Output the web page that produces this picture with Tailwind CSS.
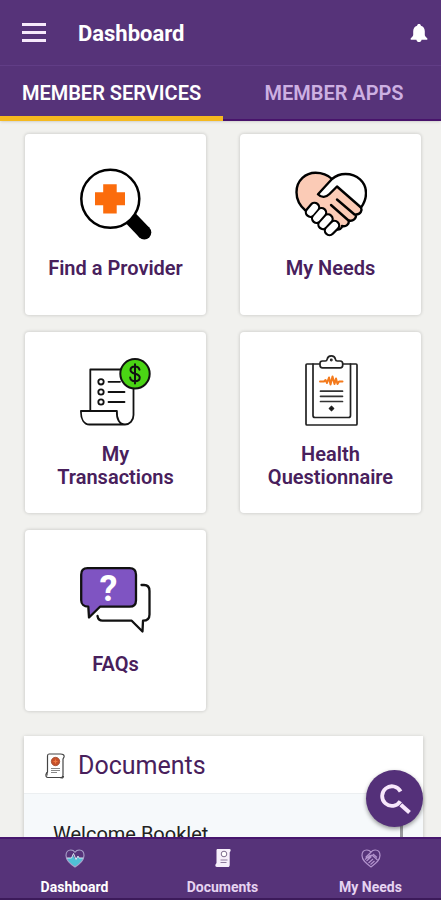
<!DOCTYPE html>
<html lang="en">
<head>
<meta charset="utf-8">
<meta name="viewport" content="width=device-width, initial-scale=1">
<title>Dashboard</title>
<script src="https://cdn.jsdelivr.net/npm/@tailwindcss/browser@4"></script>
</head>
<body class="flex h-screen flex-col overflow-hidden bg-[#f1f1ee] font-['Roboto',sans-serif]">

<header class="z-10 shrink-0 bg-[#563379] text-white shadow-sm">
  <div class="flex h-[66px] items-center border-b border-[#613d86] pr-3 pl-[22px]">
    <button type="button" aria-label="Open menu" class="flex w-6 flex-col gap-[5px]">
      <span class="h-[3px] w-full bg-[#f6e9fb]"></span>
      <span class="h-[3px] w-full bg-[#f6e9fb]"></span>
      <span class="h-[3px] w-full bg-[#f6e9fb]"></span>
    </button>
    <h1 class="ml-8 flex-1 pt-px text-[22px] font-bold">Dashboard</h1>
    <button type="button" aria-label="Notifications">
      <svg class="h-5 w-5" viewBox="0 0 20 20" fill="#fff"><path d="M10 1c1.200 0 1.800.700 1.900 1.700C14.500 3.600 15.800 5.600 15.800 8.200v3.500c0 1 .600 1.800 2.500 3.600v1.400H12.600c-.300 1.600-1.300 2.300-2.600 2.300s-2.300-.700-2.600-2.300H1.700v-1.400c1.900-1.800 2.500-2.600 2.500-3.600V8.200c0-2.600 1.300-4.600 3.900-5.500C8.200 1.700 8.800 1 10 1z"/></svg>
    </button>
  </div>
  <nav aria-label="Sections" class="grid h-[55px] grid-cols-[223fr_218fr] text-center text-[20px] font-semibold">
    <a href="#services" aria-current="page" class="flex items-center justify-center border-b-[5px] border-[#f5b91f] pt-1">MEMBER SERVICES</a>
    <a href="#apps" class="flex items-center justify-center border-b-2 border-[#48136b] pt-px pl-1 text-[#cdb0e2]">MEMBER APPS</a>
  </nav>
</header>

<main class="relative min-h-0 flex-1 overflow-hidden pt-[13px] pr-5 pl-[25px]">
  <div class="grid grid-cols-2 gap-x-[34px] gap-y-[17px] text-center text-[20px] leading-[23px] font-semibold text-[#48205c]">
    <a href="#provider" class="flex aspect-square flex-col items-center justify-center gap-4 rounded-[4px] bg-white pb-px shadow-[0_0_3px_1px_rgba(0,0,0,0.12)]">
      <svg class="h-[72px] w-[72px] overflow-visible" viewBox="0 0 72 72" aria-hidden="true">
        <path d="M50 48.500 64.300 63.500" stroke="#000" stroke-width="14"/>
        <circle cx="64.300" cy="63.500" r="7" fill="#000"/>
        <circle cx="30.300" cy="29.800" r="29" fill="#fff" stroke="#000" stroke-width="2.500"/>
        <path d="M23.200 15.200h13.500v8H45v13h-8.300v8.300H23.200v-8.300H15v-13h8.200z" fill="#fb6c0c"/>
      </svg>
      <span>Find a Provider</span>
    </a>
    <a href="#needs" class="flex aspect-square flex-col items-center justify-center gap-4 rounded-[4px] bg-white pb-px shadow-[0_0_3px_1px_rgba(0,0,0,0.12)]">
      <svg class="h-[72px] w-[72px]" viewBox="0 0 72 72" aria-hidden="true" fill="none" stroke="#000" stroke-width="2.400" stroke-linecap="round" stroke-linejoin="round">
        <path fill="#fbcbb6" d="M10.500 41.500C4 36 1.500 30 1.500 23.200 1.500 11 11 3.700 20.500 3.700c6.500 0 12 2 16.500 6.300L50 10 66 38.500c1.500 3-.500 7-5 7 .500 4-3 7-7 6 0 4-3 6.500-7 5.500 0 3-3 4-5.500 3.500L24 50z"/>
        <path fill="#fff" d="M37 10C41 6.500 46 5 50.500 5 62 5 71 13 71 24c0 5.500-2 10.500-5 14.500L42 17.500 34.500 25c-3.500 3.500-8 4-11.500.200z"/>
        <path d="M42 30.500 59.500 45.500M36 36 53.500 51.500"/>
        <g stroke-width="11.500"><path d="M15.500 43.200 19.500 38.500M21.700 49.300 26.500 43.700M28 55.500 33 50M34.500 61.500 39.500 56.500"/></g>
        <g stroke="#fff" stroke-width="7"><path d="M15.500 43.200 19.500 38.500M21.700 49.300 26.500 43.700M28 55.500 33 50M34.500 61.500 39.500 56.500"/></g>
      </svg>
      <span>My Needs</span>
    </a>
    <a href="#transactions" class="flex aspect-square flex-col items-center justify-center gap-4 rounded-[4px] bg-white pb-px shadow-[0_0_3px_1px_rgba(0,0,0,0.12)]">
      <svg class="h-[72px] w-[72px]" viewBox="0 0 72 72" aria-hidden="true" fill="none" stroke="#111" stroke-width="1.800" stroke-linecap="round" stroke-linejoin="round">
        <path d="M10.300 56V14.500H42M53.500 33v27c0 5.500-4 9.500-8.500 9.500H9.500C4 69.500.900 64 .900 56h36c-.500 8 2.500 13.500 8.200 13.500"/>
        <circle cx="21" cy="26.800" r="2.700"/><circle cx="21" cy="37" r="2.700"/><circle cx="21" cy="47" r="2.700"/>
        <path d="M28.500 26.800H40M28.500 37H44.500M28.500 47H44.500"/>
        <circle cx="55" cy="18.800" r="14.700" fill="#4ad414" stroke-width="2"/>
        <path d="M59.500 14.700c-.500-2.200-2.200-3.200-4.500-3.200-2.600 0-4.500 1.300-4.500 3.500 0 5 9.200 2.600 9.200 7.500 0 2.300-2 3.700-4.700 3.700-2.600 0-4.500-1.300-4.800-3.600M55 9.200v19.200" stroke-width="2"/>
      </svg>
      <span>My<br>Transactions</span>
    </a>
    <a href="#questionnaire" class="flex aspect-square flex-col items-center justify-center gap-4 rounded-[4px] bg-white pb-px shadow-[0_0_3px_1px_rgba(0,0,0,0.12)]">
      <svg class="h-[72px] w-[72px]" viewBox="0 0 72 72" aria-hidden="true" fill="none" stroke="#222" stroke-width="1.700" stroke-linecap="round" stroke-linejoin="round">
        <rect x="11" y="9" width="51" height="61" rx="1"/>
        <path d="M18 9v51.500c0 1.300.700 2 2 2h33.500c1.300 0 2-.700 2-2V9"/>
        <path fill="#fff" d="M25 8.700c0-1.900.800-2.700 2.500-2.700h2.800c1.300 0 1.700-.700 1.900-1.900C32.600 2 34 .900 36.300.900s3.700 1.100 4.100 3.200c.200 1.200.600 1.900 1.900 1.900h2.900c1.700 0 2.500.800 2.500 2.700v1.600c0 1.700-.800 2.500-2.500 2.500H27.500c-1.700 0-2.500-.800-2.500-2.500z"/>
        <circle cx="36.300" cy="5" r=".6"/>
        <path stroke="#f47a1c" stroke-width="2" d="M25 26.500h4l1.500-1.500 1.500 3 2-5.500 1.500 7 2-8 2 7.500 1.500-5.500 1.500 5.500 1.500-2.500H47.500"/>
        <path d="M25.500 36.200H47.500M25.500 41.300H47.500M25.500 46.500H47.500" stroke="#333"/>
        <path d="M36.500 51.500 38.500 53.500 36.500 55.500 34.500 53.500z" fill="#111"/>
      </svg>
      <span>Health<br>Questionnaire</span>
    </a>
    <a href="#faqs" class="flex aspect-square flex-col items-center justify-center gap-4 rounded-[4px] bg-white pb-px shadow-[0_0_3px_1px_rgba(0,0,0,0.12)]">
      <svg class="h-[72px] w-[72px]" viewBox="0 0 72 72" aria-hidden="true" fill="none" stroke="#111" stroke-width="2.300" stroke-linecap="round" stroke-linejoin="round">
        <path fill="#7f54c2" d="M7.500 3.200H49.500C53.500 3.200 56 5.700 56 9.700V35.200C56 39.200 53.500 41.700 49.500 41.700H20L9 52.500 8.300 41.700C4 41.700 1.200 39.200 1.200 35.200V9.700C1.200 5.700 3.500 3.200 7.500 3.200z"/>
        <path d="M61.500 20H64c4 0 5.500 2 5.500 6v23.500c0 4-2 6.200-6.500 6.200L62.500 66.500 51.700 55.700H22.500c-3 0-4.500-1.500-5-4.700"/>
        <text x="28.500" y="35.500" text-anchor="middle" font-size="36" font-weight="700" fill="#fff" stroke="none">?</text>
      </svg>
      <span>FAQs</span>
    </a>
  </div>

  <section class="mt-[25px] -mr-[2px] -ml-[1px] bg-white shadow-[0_1px_4px_rgba(0,0,0,0.22)]">
    <div class="flex h-[58px] items-center gap-3 border-b border-[#eceff1] px-[21px] pt-[3px]">
      <svg class="h-7 w-[21px]" viewBox="0 0 21 28" aria-hidden="true" fill="none" stroke="#444" stroke-width="1.200" stroke-linejoin="round">
        <path fill="#fff" d="M4 2h11.500c2.500 0 4 1 3.500 3l-1 2v16c0 2-1.500 3-3 2.500H3C1 25.500.800 24 1 22l1.500-2V4C2.500 2.800 3 2 4 2z"/>
        <path d="M16 25.500c1.500.800 2.500.200 2.500-1.500M2 20v3.500"/>
        <circle cx="10.500" cy="9.500" r="4.200" fill="#c6502a" stroke="#9c4a2e" stroke-width=".8"/>
        <path d="M8.500 9.500h4M10.500 7.500v4" stroke="#ef7b43"/>
        <path d="M6 16.500h9M6 18.500h9M6 20.500h6" stroke="#888" stroke-width="1"/>
      </svg>
      <h2 class="text-[25px] text-[#48205c]">Documents</h2>
    </div>
    <div class="flex h-24 bg-[#f6f9fb] pt-[26px] pr-5 pl-[29px]">
      <a href="#booklet" class="flex-1 text-[20px] leading-7 text-[#222]">Welcome Booklet</a>
      <span class="w-[3px] bg-[#9a9a9e]"></span>
    </div>
  </section>

  <button type="button" aria-label="Search" class="absolute right-[18px] bottom-[10px] flex h-[57px] w-[57px] items-center justify-center rounded-full bg-[#543079] shadow-[0_2px_4px_rgba(0,0,0,0.4)]">
    <svg class="h-8 w-8" viewBox="0 0 32 32" fill="none" stroke="#f7e6fb"><path d="M21.600 8.500A9.800 9.800 0 1 0 21.300 18.200" stroke-width="3.800"/><path d="M21.800 21.800 30.500 29.500" stroke-width="4.200"/></svg>
  </button>
</main>

<nav aria-label="Main" class="z-10 grid h-[63px] shrink-0 grid-cols-[149fr_147fr_145fr] border-t-2 border-b-2 border-t-[#47176e] border-b-[#3c1a5a] bg-[#563379] text-center text-[14px] leading-5 font-bold text-[#e6d3f1]">
  <a href="#dashboard" aria-current="page" class="flex flex-col items-center gap-[9px] pt-[9px] text-white">
    <svg class="h-5 w-5" viewBox="0 0 20 20" aria-hidden="true"><path d="M1.500 10h5l1.500-2.500 2.500 4 2-3 1.500 1.500h4.500C17.500 13.500 13 17 10 19 7 17 2.500 13.500 1.500 10z" fill="#4fc0d6"/><path d="M10 19C4.500 15.500 1 12 1 7.500 1 4 3.200 2 5.800 2 7.600 2 9 2.800 10 4.200 11 2.800 12.400 2 14.200 2 16.800 2 19 4 19 7.500c0 4.500-3.500 8-9 11.500z" fill="none" stroke="#a9a0c9" stroke-width="1.100"/><path d="M2 10h4.500L8.500 5.500l2.500 6 2-3.500 1 2H18" fill="none" stroke="#d9e5f2"/></svg>
    Dashboard
  </a>
  <a href="#documents" class="flex flex-col items-center gap-[9px] pt-[9px]">
    <svg class="h-5 w-5" viewBox="0 0 20 20" aria-hidden="true"><path d="M4 1h12.500c1 0 1.500.800 1 2l-.800 1.500V17c0 1.500-1 2.300-2 2H4c-1.500 0-2-1-1.500-2.500l1-1.500V2z" fill="#f6effa"/><circle cx="11" cy="6" r="2.800" fill="#fff" stroke="#7d6c8c"/><path d="M7.500 12h7M7.500 14.500h6" stroke="#8e7c9d"/></svg>
    Documents
  </a>
  <a href="#my-needs" class="flex flex-col items-center gap-[9px] pt-[9px] pl-1">
    <svg class="h-5 w-5" viewBox="0 0 20 20" aria-hidden="true" fill="none" stroke="#b394cd" stroke-width="1.200" stroke-linejoin="round"><path d="M10 19C4.500 15 1 12 1 7.500 1 4 3.200 2 5.800 2 7.600 2 9 2.800 10 4.200 11 2.800 12.400 2 14.200 2 16.800 2 19 4 19 7.500c0 4.500-3.500 7.500-9 11.500z"/><path d="M10 4.200 5 9c1.200 1.300 2.500 1 4-.500L11 7l5.500 5M4 11.500 9.500 7M5.500 13l5-4.500M7.500 15l4.500-4M9.500 16.500l4-3.500M12 6l4 3.500"/></svg>
    My Needs
  </a>
</nav>
</body>
</html>
